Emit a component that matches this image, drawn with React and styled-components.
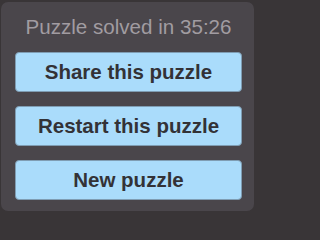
import React from 'react'
import styled, { createGlobalStyle } from 'styled-components'

const Global = createGlobalStyle`
  html, body {
    margin: 0;
    padding: 0;
    background: #393537;
    font-family: 'Liberation Sans', Arial, sans-serif;
  }
`

const Panel = styled.div`
  box-sizing: border-box;
  width: 253px;
  height: 209px;
  margin: 2px 0 0 1px;
  padding: 13px 12px 12px 14px;
  background: #4a464b;
  border-radius: 7px;
  display: flex;
  flex-direction: column;
`

const Title = styled.div`
  font-size: 20.6px;
  line-height: 24px;
  color: #a19ca1;
  text-align: center;
  white-space: nowrap;
  margin-bottom: 13px;
`

const Actions = styled.div`
  display: flex;
  flex-direction: column;
  gap: 14px;
`

const ActionButton = styled.button`
  box-sizing: border-box;
  height: 40px;
  width: 100%;
  margin: 0;
  padding: 0;
  background: #aadcfb;
  border: 1px solid #7f9db3;
  border-radius: 4px;
  font-family: 'Liberation Sans', Arial, sans-serif;
  font-weight: bold;
  font-size: 20.5px;
  color: #333236;
  cursor: pointer;
`

export default function App() {
  return (
    <>
      <Global />
      <Panel>
        <Title>Puzzle solved in 35:26</Title>
        <Actions>
          <ActionButton>Share this puzzle</ActionButton>
          <ActionButton>Restart this puzzle</ActionButton>
          <ActionButton>New puzzle</ActionButton>
        </Actions>
      </Panel>
    </>
  )
}
